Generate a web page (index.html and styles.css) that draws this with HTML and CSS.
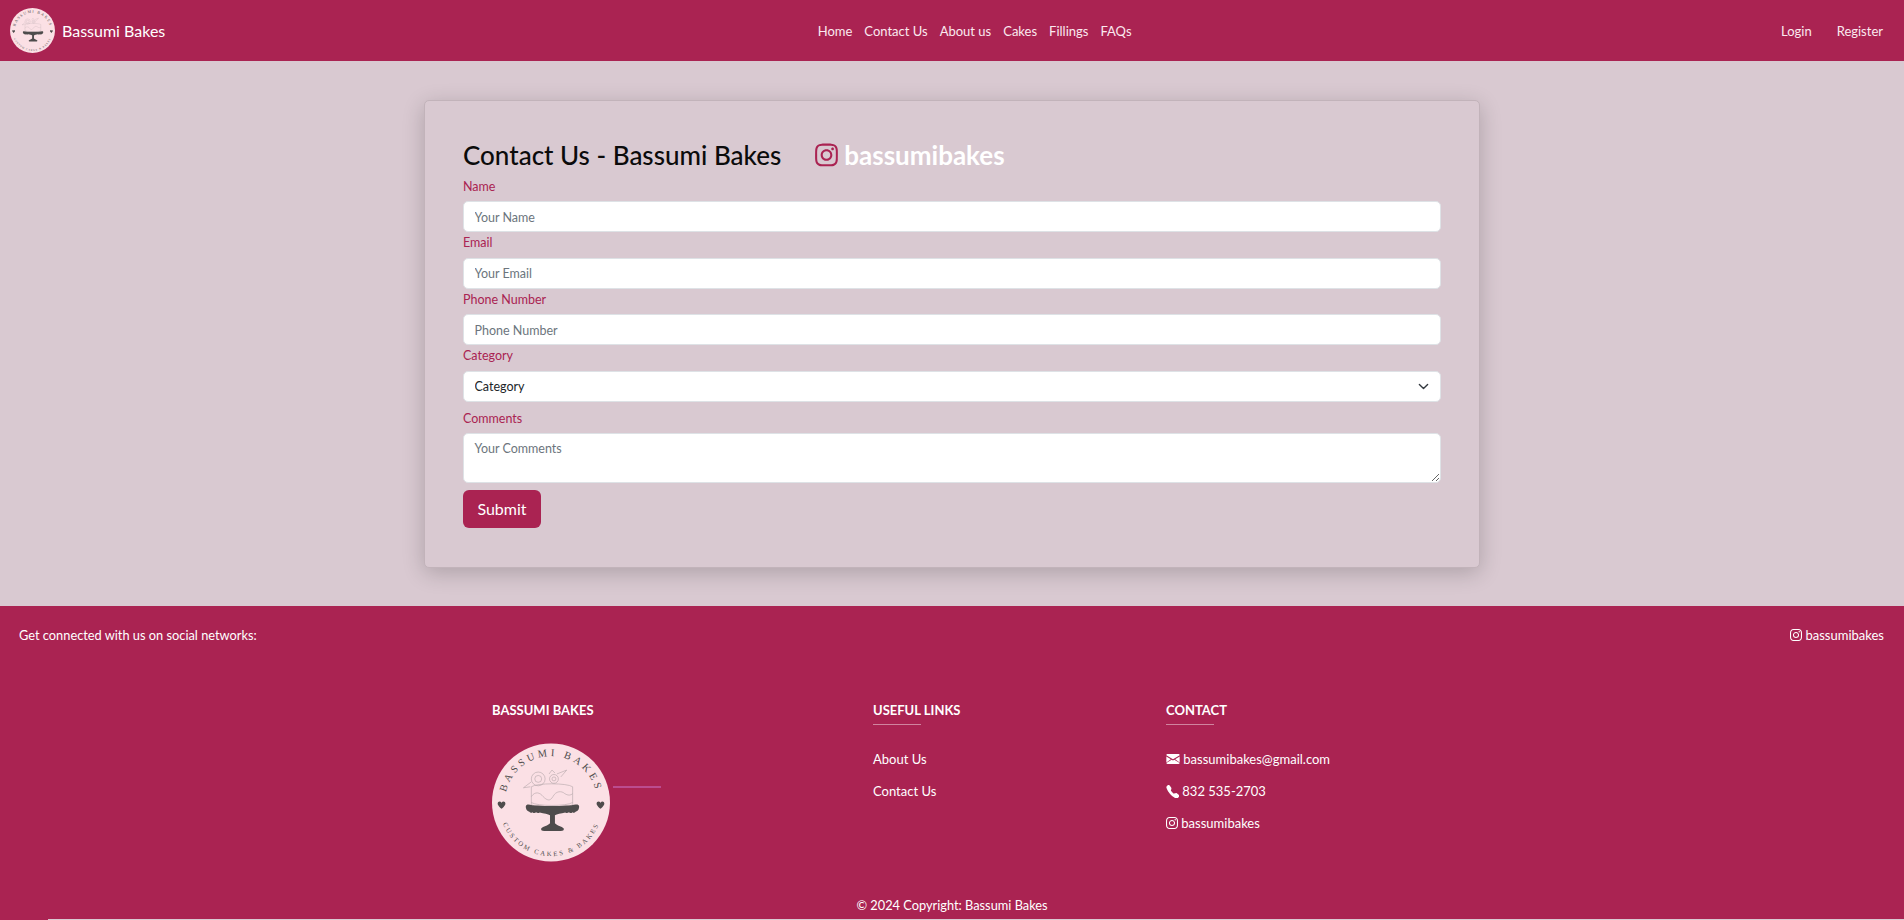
FILE: index.html
```html
<!DOCTYPE html>
<html lang="en">
<head>
<meta charset="utf-8">
<title>Contact Us - Bassumi Bakes</title>
<link rel="stylesheet" href="styles.css">
</head>
<body>
<svg class="defs" width="0" height="0" aria-hidden="true">
  <defs>
    <symbol id="logo" viewBox="0 0 120 120">
      <circle cx="60" cy="60" r="60" fill="#fbe0e5"/>
      <path id="arcTop" d="M14.600 47.800 A47 47 0 0 1 105.400 47.800" fill="none"/>
      <path id="arcBot" d="M9 76 A53 53 0 0 0 111 76" fill="none"/>
      <text class="logo-top"><textPath href="#arcTop" startOffset="50%" text-anchor="middle">BASSUMI BAKES</textPath></text>
      <text class="logo-bot"><textPath href="#arcBot" startOffset="50%" text-anchor="middle">CUSTOM CAKES &amp; BAKES</textPath></text>
      <path d="M9.700 60.200c-1.700-2.300-4.800-.7-3.700 2 .7 1.600 2.300 2.800 3.700 4.200 1.400-1.400 3-2.600 3.700-4.200 1.100-2.700-2-4.300-3.700-2zM110.300 60.200c-1.700-2.300-4.800-.7-3.700 2 .7 1.600 2.300 2.800 3.700 4.200 1.400-1.400 3-2.600 3.700-4.200 1.100-2.700-2-4.300-3.700-2z" fill="#4e4c4c"/>
      <g fill="none" stroke="#b3a5a8" stroke-width=".6">
        <path d="M40 44v18c5 4 37 4 42 0V44"/>
        <path d="M40 44c6-4 36-4 42 0"/>
        <path d="M40 60c6 4 36 4 42 0"/>
        <path d="M40 54c4-6 9-4 12 0 4 4 7 5 10 0 3-6 9-6 12-3 3 2 6 2 8 0"/>
        <circle cx="47" cy="36" r="7"/><circle cx="47" cy="36" r="3.500"/>
        <circle cx="63" cy="36" r="4.500"/><circle cx="63" cy="36" r="2"/>
        <path d="M40 39l-8 6 7-1M66 31l10-4-6 7M58 31l3-4 3 3"/>
      </g>
      <path d="M37 62c8 2 40 2 48 0h2c2 .4 2 3 1 5-.8 1.600-2.300 1.500-3 2.500-.8 1.200-2.400 1.200-3.200.3-.9 1.200-2.700 1.200-3.600.2-1 1-2.800 1-3.700.2-4.500 1-8.500 1.600-10.500 2.800v8c2 2.500 7 3 9 5.500.4 1.800-1 2.500-3 2.500H53c-2 0-3.400-.7-3-2.500 2-2.500 7-3 9-5.500v-8c-2-1.200-6-1.800-10.500-2.800-.9.800-2.700.8-3.700-.2-.9 1-2.700 1-3.600-.2-.8.9-2.400.9-3.200-.3-.7-1-2.200-.9-3-2.500-1-2-1-4.600 1-5h2z" fill="#4e4c4c"/>
    </symbol>
    <symbol id="ig" viewBox="0 0 448 512">
      <path fill="currentColor" d="M224.100 141c-63.600 0-114.900 51.300-114.900 114.900s51.300 114.900 114.900 114.900S339 319.500 339 255.900 287.700 141 224.100 141zm0 189.600c-41.100 0-74.700-33.500-74.700-74.700s33.500-74.700 74.700-74.700 74.700 33.500 74.700 74.700-33.600 74.700-74.700 74.700zm146.400-194.300c0 14.900-12 26.800-26.800 26.800-14.900 0-26.800-12-26.800-26.800s12-26.800 26.800-26.800 26.800 12 26.800 26.800zm76.100 27.200c-1.700-35.900-9.900-67.700-36.200-93.900-26.200-26.200-58-34.400-93.900-36.200-37-2.100-147.900-2.100-184.900 0-35.800 1.700-67.600 9.900-93.900 36.100s-34.400 58-36.200 93.900c-2.100 37-2.100 147.900 0 184.900 1.700 35.900 9.900 67.700 36.200 93.900s58 34.400 93.900 36.200c37 2.100 147.900 2.100 184.900 0 35.900-1.700 67.700-9.900 93.900-36.200 26.200-26.200 34.400-58 36.200-93.900 2.100-37 2.100-147.800 0-184.800zM398.800 388c-7.800 19.600-22.900 34.700-42.600 42.600-29.500 11.700-99.500 9-132.100 9s-102.700 2.600-132.100-9c-19.600-7.800-34.700-22.900-42.600-42.600-11.700-29.500-9-99.500-9-132.100s-2.600-102.700 9-132.100c7.800-19.600 22.900-34.700 42.600-42.600 29.500-11.700 99.500-9 132.100-9s102.700-2.600 132.100 9c19.600 7.800 34.700 22.900 42.600 42.600 11.700 29.500 9 99.500 9 132.100s2.700 102.700-9 132.100z"/>
    </symbol>
    <symbol id="mail" viewBox="0 0 16 12">
      <path fill="currentColor" d="M1.500 0h13c.8 0 1.500.6 1.500 1.400L8 6.300 0 1.400C0 .6.700 0 1.500 0zM0 3l5.400 3.300L0 10.300V3zm6.400 3.900L8 7.900l1.600-1 6.400 3.900c-.2.700-.8 1.200-1.500 1.200h-13c-.7 0-1.300-.5-1.500-1.200l6.400-3.900zm4.200-.6L16 3v7.300l-5.400-4z"/>
    </symbol>
    <symbol id="phone" viewBox="0 0 16 16">
      <path fill="currentColor" d="M1.900.5a1.700 1.700 0 0 1 2.600.2l1.800 2.300c.3.400.5 1 .3 1.500l-.5 2.200c-.1.300 0 .6.200.8L8.800 10.300c.2.200.5.300.8.200l2.200-.5c.5-.1 1.100 0 1.500.3l2.300 1.800c.8.600.9 1.800.2 2.600l-1 1c-.7.700-1.800 1-2.800.7A18.600 18.600 0 0 1 5 11 18.600 18.600 0 0 1 .6 3.800C.3 2.800.6 1.700 1.300 1l.6-.5z"/>
    </symbol>
  </defs>
</svg>

<header class="navbar">
  <a class="brand" href="#">
    <svg class="brand-logo"><use href="#logo"/></svg>
    <span>Bassumi Bakes</span>
  </a>
  <nav class="nav-main">
    <a href="#">Home</a>
    <a href="#">Contact Us</a>
    <a href="#">About us</a>
    <a href="#">Cakes</a>
    <a href="#">Fillings</a>
    <a href="#">FAQs</a>
  </nav>
  <nav class="nav-auth">
    <a href="#">Login</a>
    <a href="#">Register</a>
  </nav>
</header>

<main class="main">
  <section class="card">
    <div class="title-row">
      <h1>Contact Us - Bassumi Bakes</h1>
      <a class="title-ig" href="#"><svg class="title-ig-icon"><use href="#ig"/></svg><span>bassumibakes</span></a>
    </div>
    <form class="contact-form">
      <label class="field"><span class="label">Name</span><input type="text" placeholder="Your Name"></label>
      <label class="field"><span class="label">Email</span><input type="email" placeholder="Your Email"></label>
      <label class="field"><span class="label">Phone Number</span><input type="tel" placeholder="Phone Number"></label>
      <label class="field"><span class="label">Category</span>
        <span class="select-wrap">
          <select><option>Category</option></select>
          <svg class="chevron" viewBox="0 0 16 16"><path fill="none" stroke="#343a40" stroke-linecap="round" stroke-linejoin="round" stroke-width="2" d="m2 5 6 6 6-6"/></svg>
        </span>
      </label>
      <label class="field field-comments"><span class="label">Comments</span><textarea placeholder="Your Comments"></textarea></label>
      <button class="submit" type="button">Submit</button>
    </form>
  </section>
</main>

<footer class="footer">
  <div class="social">
    <span class="social-text">Get connected with us on social networks:</span>
    <a href="#"><svg class="ig-small"><use href="#ig"/></svg> bassumibakes</a>
  </div>
  <div class="columns">
    <div class="col col-brand">
      <h2>BASSUMI BAKES</h2>
      <div class="logo-row">
        <svg class="footer-logo"><use href="#logo"/></svg>
        <span class="logo-rule"></span>
      </div>
    </div>
    <div class="col col-links">
      <h2>USEFUL LINKS</h2>
      <span class="rule"></span>
      <a href="#">About Us</a>
      <a href="#">Contact Us</a>
    </div>
    <div class="col col-contact">
      <h2>CONTACT</h2>
      <span class="rule"></span>
      <a href="#"><svg class="mail"><use href="#mail"/></svg> bassumibakes@gmail.com</a>
      <a href="#"><svg class="phone"><use href="#phone"/></svg> 832 535-2703</a>
      <a href="#"><svg class="ig-small"><use href="#ig"/></svg> bassumibakes</a>
    </div>
  </div>
  <div class="copyright">© 2024 Copyright: Bassumi Bakes</div>
</footer>
</body>
</html>
```

FILE: styles.css
```css
* { box-sizing: border-box; }
html, body { margin: 0; height: 920px; overflow: hidden; }
body {
  font-family: "Lato", "Noto Sans", sans-serif;
  font-size: 13px;
  color: #fff;
  background: #d9c9d1;
  display: flex;
  flex-direction: column;
}
a { color: inherit; text-decoration: none; }
.defs { position: absolute; }

.logo-top { font: 10.500px "Liberation Serif", serif; letter-spacing: 3.300px; fill: #4e4c4c; }
.logo-bot { font: 6.800px "Liberation Serif", serif; letter-spacing: 2.100px; fill: #4e4c4c; }

.navbar {
  height: 61px;
  flex: none;
  background: #aa2352;
  display: flex;
  align-items: center;
  justify-content: space-between;
  padding: 0 21px 0 10px;
}
.brand { display: flex; align-items: center; gap: 7px; font-size: 16px; }
.brand-logo { width: 45px; height: 45px; }
.nav-main, .nav-auth { display: flex; }
.nav-main { gap: 12px; margin-left: 3px; color: #fbe9ef; }
.nav-auth { gap: 25px; color: #fbe9ef; }

.main { flex: none; height: 545px; padding-top: 39px; }
.card {
  width: 1056px;
  height: 468px;
  margin: 0 auto;
  padding: 35px 38px 0;
  background: #d9c9d1;
  border: 1px solid #c2b3ba;
  border-radius: 5px;
  box-shadow: 0 5px 22px rgba(0, 0, 0, .2);
}
.title-row { display: flex; align-items: flex-start; gap: 34px; height: 40px; }
h1 { margin: 0; font-size: 26px; font-weight: 500; color: #0b0b0b; line-height: 38px; white-space: nowrap; }
.title-ig { display: flex; align-items: center; gap: 6px; height: 38px; font-size: 26px; font-weight: 700; color: #fff; }
.title-ig-icon { width: 23px; height: 26px; color: #aa2352; }

.contact-form { display: flex; flex-direction: column; }
.field { display: flex; flex-direction: column; }
.label { color: #aa2352; font-size: 12.500px; line-height: 21px; height: 19.400px; margin-bottom: 6px; }
.field input, .field select, .field textarea {
  display: block;
  width: 100%;
  height: 31px;
  padding: 1px 10.500px 0;
  background: #fff;
  border: 1px solid #dee2e6;
  border-radius: 5px;
  font: 12.500px "Lato", sans-serif;
  color: #212529;
  outline: none;
}
.field input::placeholder, .field textarea::placeholder { color: #6c757d; opacity: 1; }
.field select { appearance: none; }
.select-wrap { position: relative; display: block; }
.chevron { position: absolute; right: 12px; top: 10px; width: 11px; height: 11px; }
.field-comments { margin-top: 6px; }
.field textarea { height: 50px; padding: 7px 10.500px; resize: vertical; }
.submit {
  align-self: flex-start;
  margin-top: 7px;
  width: 78px;
  height: 38px;
  background: #aa2352;
  color: #fff;
  border: 0;
  border-radius: 6px;
  font: 16px "Lato", sans-serif;
}

.footer {
  position: relative;
  height: 313px;
  flex: none;
  background: #aa2352;
  display: flex;
  flex-direction: column;
}
.footer::after {
  content: "";
  position: absolute;
  left: 0;
  bottom: -1px;
  width: 48px;
  height: 1px;
  background: #aa2352;
}
.social {
  display: flex;
  justify-content: space-between;
  align-items: center;
  padding: 19px 20px 0 19px;
  height: 39px;
}
.social-text { font-size: 12.800px; }
.ig-small { width: 12px; height: 14px; vertical-align: -2px; }
.mail { width: 14px; height: 10px; vertical-align: 0; }
.phone { width: 13px; height: 13px; vertical-align: -2px; }
.columns { display: flex; padding: 56px 0 0 492px; height: 249px; }
h2 { margin: 0; font-size: 13px; font-weight: 700; line-height: 18px; color: #fff; white-space: nowrap; }
.col { display: flex; flex-direction: column; align-items: flex-start; }
.col-brand { width: 381px; }
.col-links { width: 293px; }
.rule { display: block; width: 48px; height: 1px; margin: 5px 0 18px; background: #d0849f; }
.col a { line-height: 32px; white-space: nowrap; }
.logo-row { display: flex; align-items: center; margin-top: 24px; }
.footer-logo { width: 118px; height: 119px; }
.logo-rule { display: block; width: 48px; height: 2px; margin: -32px 0 0 3px; background: #bb4c8f; }
.copyright { text-align: center; font-size: 12.800px; margin-top: 1px; line-height: 20px; }
```
